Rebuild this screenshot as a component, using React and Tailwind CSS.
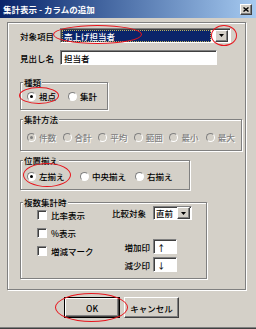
import React from 'react';

const etched = 'border border-[#808080] shadow-[inset_1px_1px_0_#fff,1px_1px_0_#fff]';
const sunken =
  'border border-t-[#808080] border-l-[#808080] border-r-white border-b-white shadow-[inset_1px_1px_0_#404040]';
const raised =
  'bg-[#d4d0c8] border border-t-white border-l-white border-r-[#404040] border-b-[#404040] shadow-[inset_-1px_-1px_0_#808080]';

function Radio({ checked, disabled }) {
  return (
    <span
      className={`flex items-center justify-center shrink-0 w-[9px] h-[9px] rounded-full border border-t-[#808080] border-l-[#808080] border-r-white border-b-white ${
        disabled ? 'bg-[#d4d0c8]' : 'bg-white'
      }`}
    >
      {checked && (
        <span className={`w-[3px] h-[3px] rounded-full ${disabled ? 'bg-[#808080]' : 'bg-black'}`} />
      )}
    </span>
  );
}

function RadioItem({ label, checked, disabled, width }) {
  return (
    <div className={`flex items-center gap-[3px] shrink-0 ${width}`}>
      <Radio checked={checked} disabled={disabled} />
      <span className={disabled ? 'text-[#808080] [text-shadow:1px_1px_0_#fff]' : ''}>{label}</span>
    </div>
  );
}

function Check({ label }) {
  return (
    <div className="flex items-center h-[14px] gap-[4px]">
      <span className={`w-[10px] h-[10px] bg-white ${sunken}`} />
      <span>{label}</span>
    </div>
  );
}

function Group({ title, className, children }) {
  return (
    <div className={`relative ${etched} ${className}`}>
      <span className="absolute -top-[7px] left-[2px] px-[1px] bg-[#d4d0c8] leading-[12px]">{title}</span>
      {children}
    </div>
  );
}

function DropButton() {
  return (
    <span className={`flex items-center justify-center w-[13px] h-[12px] ${raised}`}>
      <svg width="5" height="3" viewBox="0 0 5 3">
        <path d="M0 0h5L2.5 3z" fill="#000" />
      </svg>
    </span>
  );
}

function Ellipse({ className }) {
  return <div className={`absolute rounded-[50%] border-[1.5px] border-[#e8141c] pointer-events-none ${className}`} />;
}

export default function App() {
  return (
    <div className="relative w-[256px] h-[329px] bg-[#d4d0c8] flex flex-col text-[8.5px] leading-[12px] font-medium text-black font-['Noto_Sans_CJK_JP','Noto_Sans',sans-serif] overflow-hidden">
      {/* Title bar */}
      <div className="flex items-center justify-between h-[18px] pl-[3px] pr-[4px] bg-gradient-to-r from-[#0a246a] to-[#a6caf0]">
        <span className="text-white font-bold text-[8.5px]">集計表示 - カラムの追加</span>
        <span className={`flex items-center justify-center w-[12px] h-[11px] ${raised}`}>
          <svg width="6" height="5" viewBox="0 0 6 5">
            <path d="M0.5 0.5l5 4M5.5 0.5l-5 4" stroke="#000" strokeWidth="1.4" />
          </svg>
        </span>
      </div>

      {/* Panel */}
      <div className={`ml-[7px] mt-[4px] w-[239px] h-[268px] flex flex-col ${etched}`}>
        <div className="flex items-center mt-[5px] h-[15px]">
          <span className="pl-[12px] w-[52px]">対象項目</span>
          <div className={`flex items-center w-[171px] h-[15px] bg-white p-[1px] pr-[2px] gap-[4px] ${sunken}`}>
            <span className="flex-1 h-[12px] bg-[#0a246a] text-white pl-[2px] leading-[12px] outline-1 outline-dotted outline-[#b8b060] -outline-offset-1">
              売上げ担当者
            </span>
            <DropButton />
          </div>
        </div>

        <div className="flex items-center mt-[7px] h-[15px]">
          <span className="pl-[12px] w-[52px]">見出し名</span>
          <div className={`flex items-center w-[157px] h-[15px] bg-white pl-[3px] ${sunken}`}>担当者</div>
        </div>

        <Group title="種類" className="ml-[12px] mt-[17px] w-[88px] h-[28px] flex items-center pl-[6px]">
          <RadioItem label="視点" checked width="w-[41px]" />
          <RadioItem label="集計" width="w-[36px]" />
        </Group>

        <Group title="集計方法" className="ml-[12px] mt-[9px] w-[222px] h-[32px] flex items-center pl-[6px] pt-[4px]">
          <RadioItem label="件数" checked disabled width="w-[35.6px]" />
          <RadioItem label="合計" disabled width="w-[35.6px]" />
          <RadioItem label="平均" disabled width="w-[35.6px]" />
          <RadioItem label="範囲" disabled width="w-[35.6px]" />
          <RadioItem label="最小" disabled width="w-[36.4px]" />
          <RadioItem label="最大" disabled width="w-[32px]" />
        </Group>

        <Group title="位置揃え" className="ml-[12px] mt-[9px] w-[170px] h-[30px] flex items-center pl-[6px] pt-[2px]">
          <RadioItem label="左揃え" checked width="w-[53px]" />
          <RadioItem label="中央揃え" width="w-[55px]" />
          <RadioItem label="右揃え" width="w-[40px]" />
        </Group>

        <Group title="複数集計時" className="ml-[12px] mt-[12px] w-[187px] h-[77px] flex">
          <div className="flex flex-col gap-[4px] pl-[16px] pt-[5px] w-[91px]">
            <Check label="比率表示" />
            <Check label="%表示" />
            <Check label="増減マーク" />
          </div>
          <div className="flex flex-col pt-[3px]">
            <div className="flex items-center h-[14px]">
              <span className="w-[41px]">比較対象</span>
              <div className={`flex items-center w-[39px] h-[14px] bg-white pl-[2px] pr-[1px] ${sunken}`}>
                <span className="flex-1">直前</span>
                <DropButton />
              </div>
            </div>
            <div className="flex items-center h-[15px] mt-[19px]">
              <span className="w-[41px] text-right pr-[3px]">増加印</span>
              <div className={`flex items-center w-[24px] h-[15px] bg-white pl-[3px] ${sunken}`}>↑</div>
            </div>
            <div className="flex items-center h-[15px] mt-[3px]">
              <span className="w-[41px] text-right pr-[3px]">減少印</span>
              <div className={`flex items-center w-[24px] h-[15px] bg-white pl-[3px] ${sunken}`}>↓</div>
            </div>
          </div>
        </Group>
      </div>

      {/* Buttons */}
      <div className="flex mt-[7px] pl-[64px] gap-[4px]">
        <div className="border border-black">
          <div className={`flex items-center justify-center w-[54px] h-[19px] ${raised}`}>OK</div>
        </div>
        <div className={`flex items-center justify-center w-[55px] h-[21px] ${raised}`}>キャンセル</div>
      </div>

      <div className="mt-auto h-[2px] border-t border-[#808080] bg-[#404040]" />

      {/* annotation marks */}
      <Ellipse className="left-[53px] top-[25px] w-[89px] h-[19px]" />
      <Ellipse className="left-[211px] top-[25px] w-[26px] h-[21px]" />
      <Ellipse className="left-[19px] top-[87px] w-[40px] h-[17px]" />
      <Ellipse className="left-[23px] top-[163px] w-[48px] h-[24px]" />
      <Ellipse className="left-[55px] top-[293px] w-[73px] h-[29px]" />
    </div>
  );
}
